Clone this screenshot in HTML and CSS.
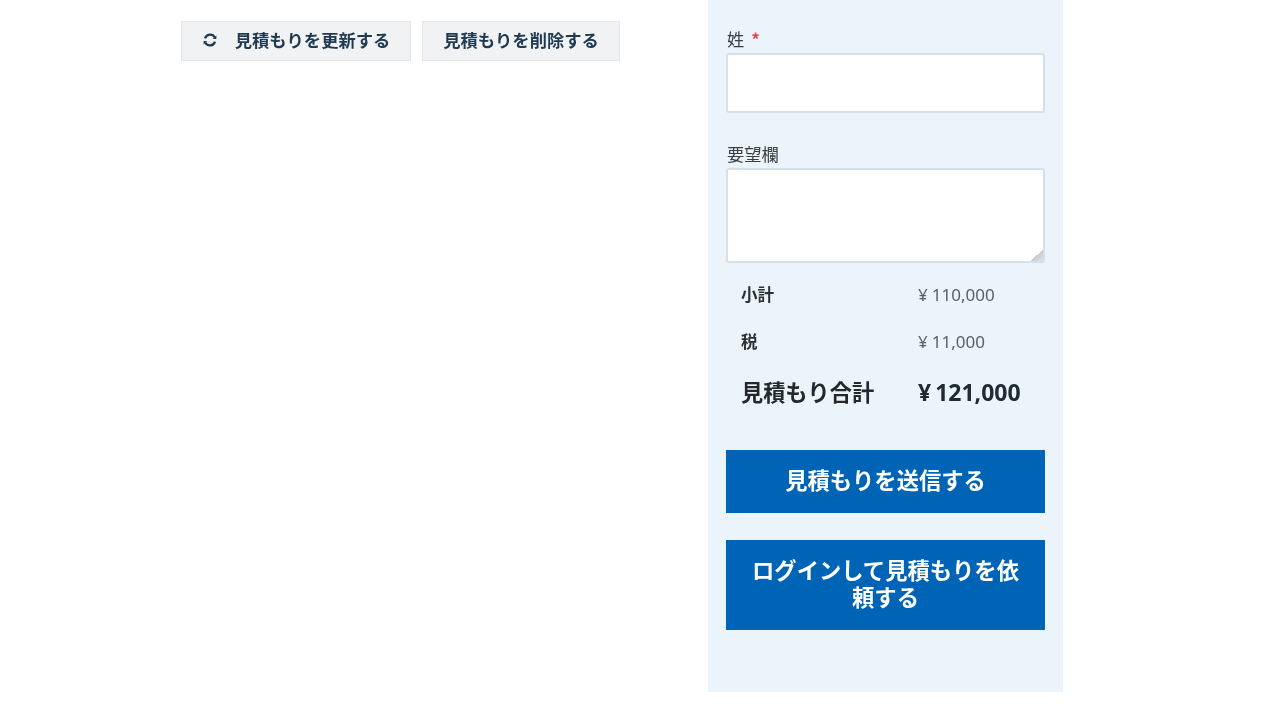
FILE: index.html
```html
<!DOCTYPE html>
<html lang="ja">
<head>
<meta charset="utf-8">
<title>見積もり</title>
<link rel="stylesheet" href="styles.css">
</head>
<body>
<div class="page">
  <main class="cart">
    <div class="actions">
      <button class="btn btn-update" type="button">
        <svg class="icon" viewBox="0 0 16 16" aria-hidden="true">
          <path d="M3 6.4A5.3 5.3 0 0 1 12.8 5.4" />
          <path d="M13 9.6A5.3 5.3 0 0 1 3.2 10.6" />
          <path class="tip" d="M14.4 3.4v3.6H10.8z" />
          <path class="tip" d="M1.6 12.6V9H5.2z" />
        </svg>
        <span>見積もりを更新する</span>
      </button>
      <button class="btn btn-delete" type="button">見積もりを削除する</button>
    </div>
  </main>
  <aside class="panel">
    <div class="field field-name">
      <label class="label" for="name">姓 <span class="req">*</span></label>
      <input class="input" id="name" type="text">
    </div>
    <div class="field field-note">
      <label class="label" for="note">要望欄</label>
      <div class="textarea-wrap">
        <textarea class="textarea" id="note"></textarea>
      </div>
    </div>
    <div class="totals">
      <div class="row row-sub"><span class="key">小計</span><span class="val"><span class="yen">¥</span>110,000</span></div>
      <div class="row row-tax"><span class="key">税</span><span class="val"><span class="yen">¥</span>11,000</span></div>
      <div class="row row-total"><span class="key">見積もり合計</span><span class="val"><span class="yen">¥</span>121,000</span></div>
    </div>
    <button class="cta cta-send" type="button">見積もりを送信する</button>
    <button class="cta cta-login" type="button">ログインして見積もりを依頼する</button>
  </aside>
</div>
</body>
</html>
```
FILE: styles.css
```css
* { box-sizing: border-box; }
html, body { margin: 0; height: 100%; background: #fff; overflow: hidden; }
body {
  font-family: "Noto Sans", "Noto Sans CJK JP", sans-serif;
  color: #23282d;
}
.page {
  display: flex;
  align-items: flex-start;
  height: 720px;
  padding-left: 181px;
  filter: blur(0.7px);
}
.cart { width: 527px; padding-top: 21px; }
.actions { display: flex; gap: 11px; }
.btn {
  display: flex;
  align-items: center;
  justify-content: center;
  height: 40px;
  padding: 0 0 2px;
  border: 1px solid #e2e6ea;
  background: #f0f2f4;
  color: #1f3a52;
  font: 700 17.3px/1 "Noto Sans CJK JP", sans-serif;
}
.btn-update { width: 230px; gap: 17px; padding-left: 0; }
.btn-delete { width: 198px; }
.icon { width: 16px; height: 16px; fill: none; stroke: #1f3a52; stroke-width: 2.2; }
.icon .tip { fill: #1f3a52; stroke: none; }
.panel {
  width: 355px;
  height: 692px;
  padding: 30px 18px 0;
  background: #ebf4fb;
}
.field { display: flex; flex-direction: column; }
.field-note { margin-top: 32px; }
.label {
  height: 23px;
  padding-left: 1px;
  font: 400 17.3px/18px "Noto Sans CJK JP", sans-serif;
  color: #3a3f44;
}
.req { color: #e8434e; margin-left: 3px; font-size: 17px; font-weight: 700; }
.input, .textarea {
  display: block;
  width: 319px;
  background: #fff;
  border: 2px solid #d8e0e7;
  border-radius: 3px;
  margin: 0;
}
.input { height: 60px; }
.textarea-wrap { position: relative; width: 319px; height: 95px; }
.textarea { height: 95px; resize: none; }
.textarea-wrap::after {
  content: "";
  position: absolute;
  right: 2px;
  bottom: 2px;
  width: 12px;
  height: 12px;
  background: linear-gradient(135deg, transparent 50%, #c9cdd0 50%, #dfe2e4 100%);
}
.totals { padding: 9px 0 0 15px; }
.row { display: flex; align-items: center; }
.key {
  width: 177px;
  padding-bottom: 3px;
  font: 700 16.5px/1 "Noto Sans CJK JP", sans-serif;
  color: #2b3035;
}
.val {
  padding-bottom: 3px;
  font: 400 17px/1 "Noto Sans", "Noto Sans CJK JP", sans-serif;
  color: #5a6068;
}
.yen { margin-right: 4px; }
.row-sub { height: 47px; }
.row-tax { height: 47px; }
.row-total { height: 56px; }
.row-total .key { padding-bottom: 5px; font-size: 22.2px; color: #23282d; }
.row-total .val {
  padding-bottom: 4px;
  font: 700 23px/1 "Noto Sans", "Noto Sans CJK JP", sans-serif;
  color: #1f2a33;
}
.cta {
  display: block;
  width: 319px;
  margin: 0;
  padding: 0 20px 4px;
  border: 0;
  background: #0064b6;
  color: #fff;
  font: 700 22.3px/27px "Noto Sans CJK JP", sans-serif;
  text-align: center;
}
.cta-send { height: 63px; margin-top: 28px; }
.cta-login { height: 90px; margin-top: 27px; }
```
